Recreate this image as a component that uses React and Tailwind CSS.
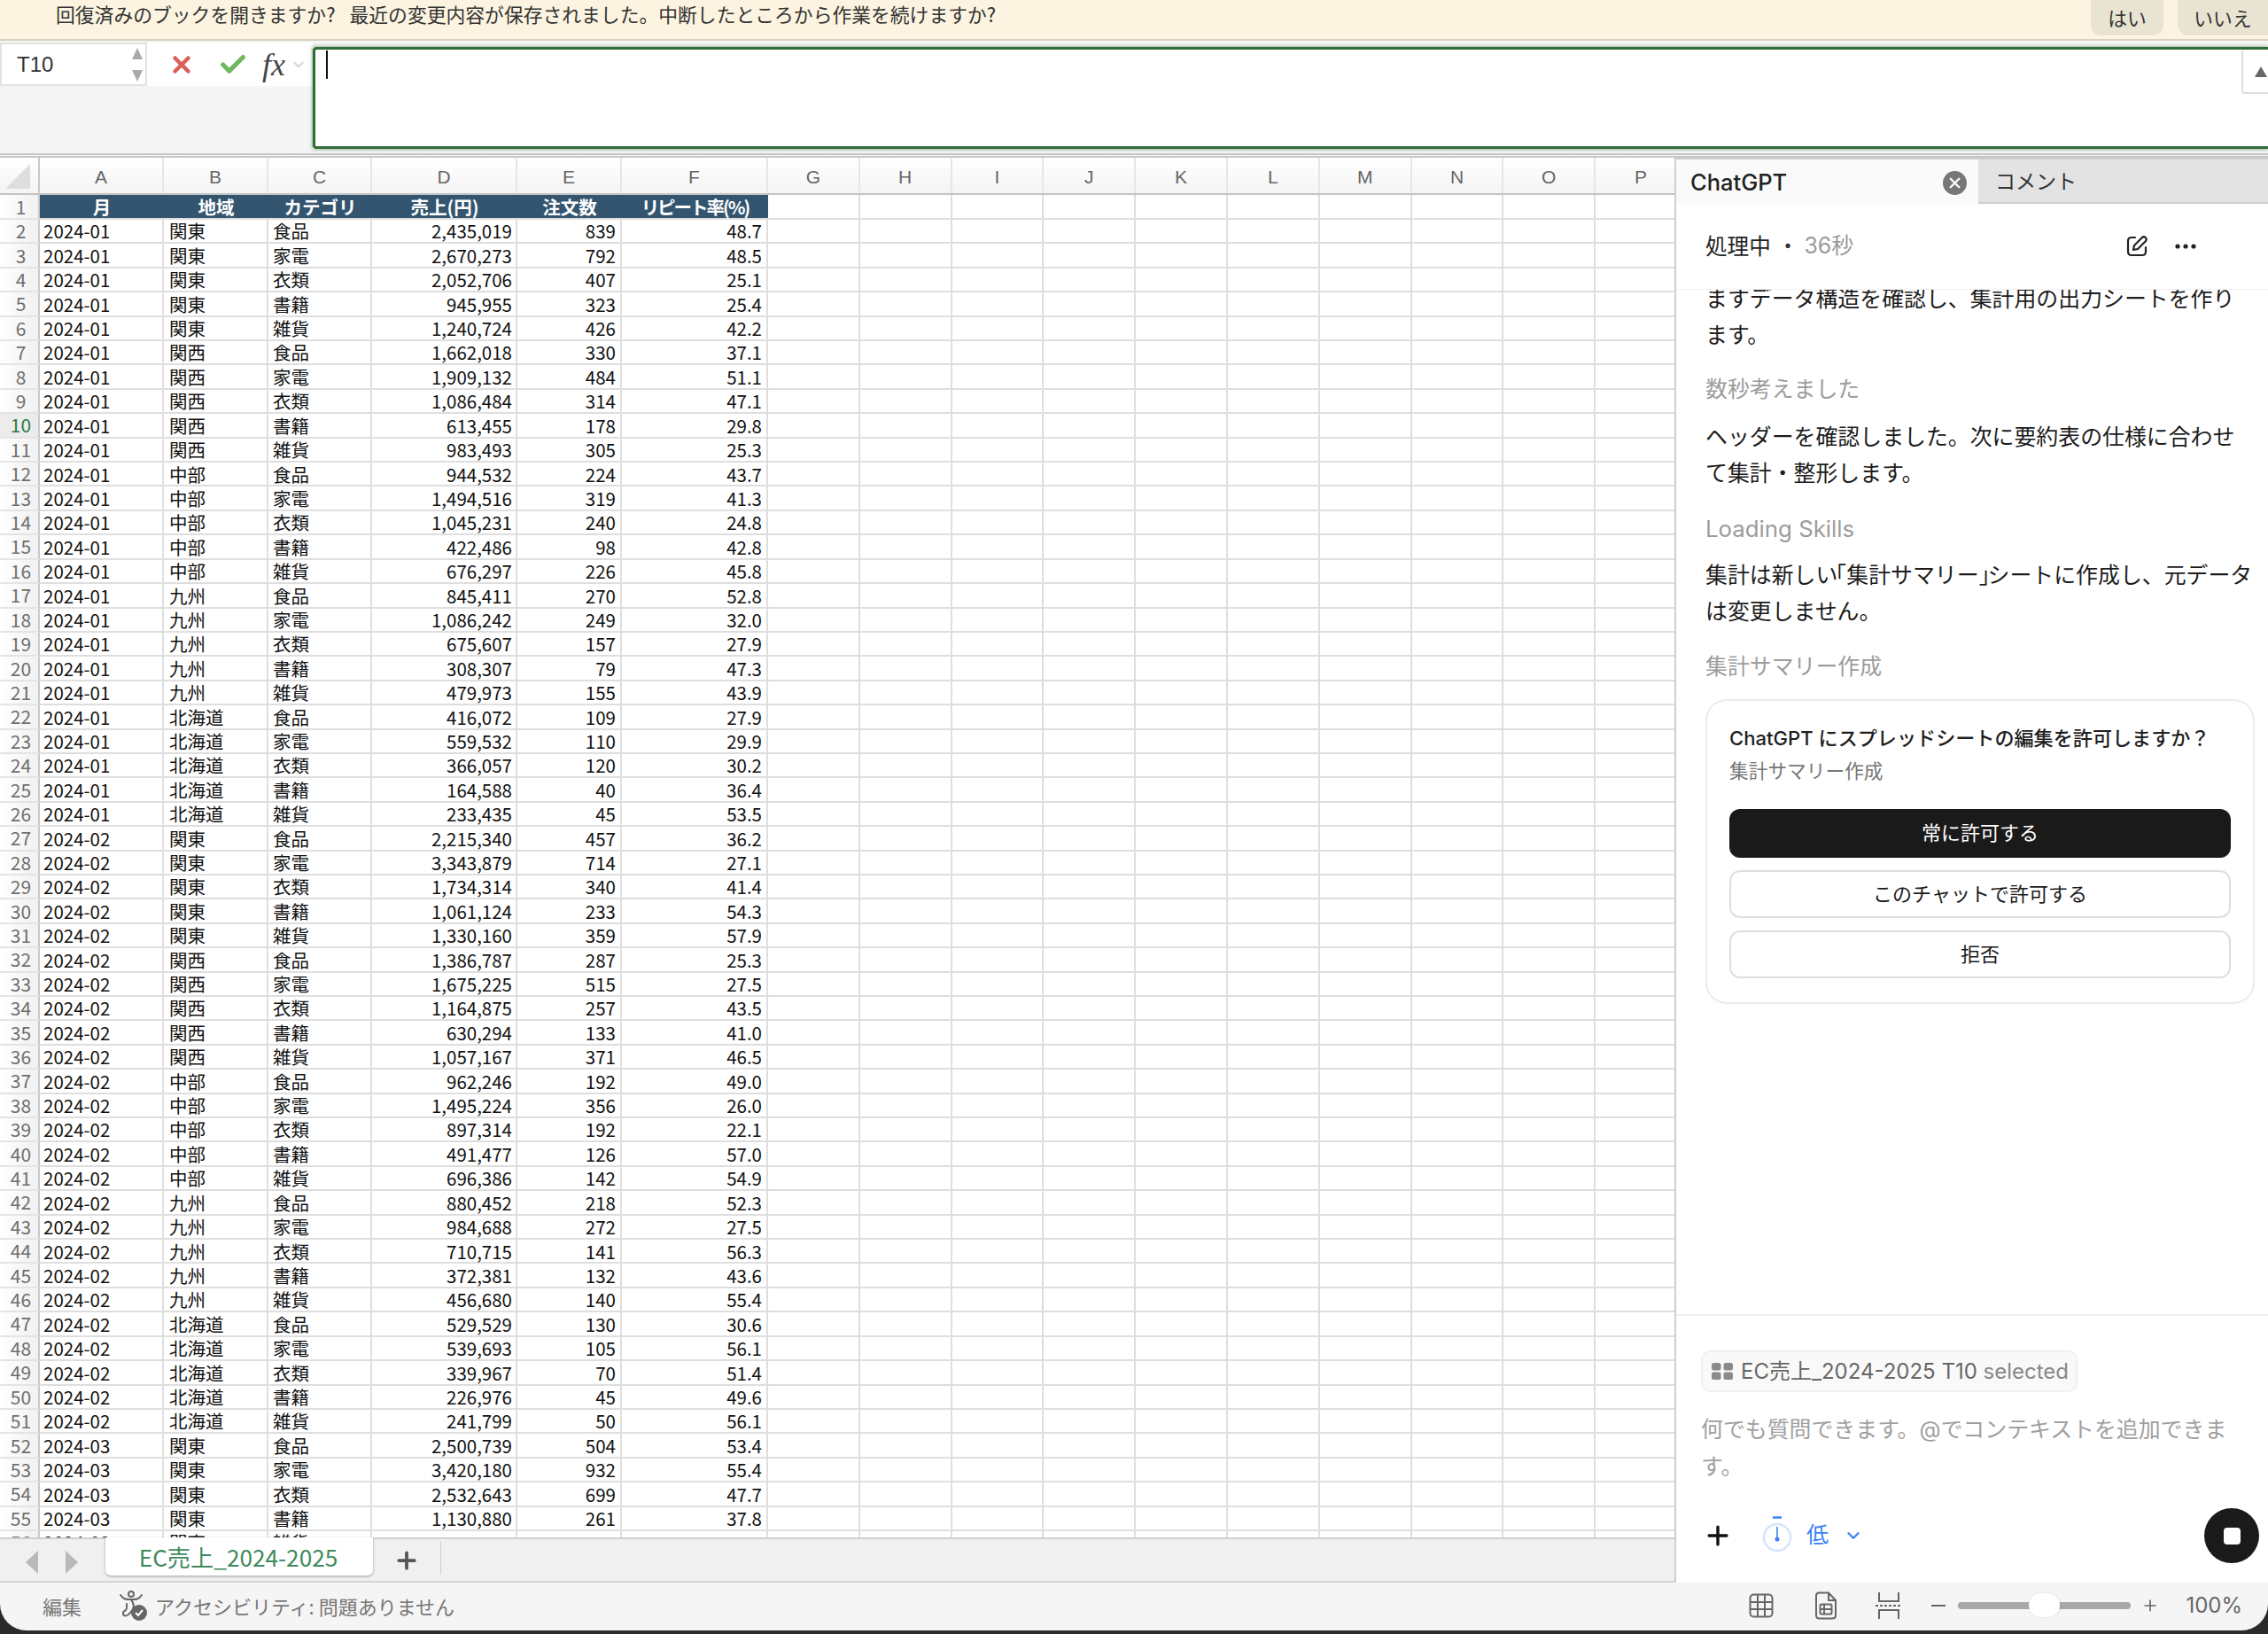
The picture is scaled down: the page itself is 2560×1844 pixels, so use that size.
import { Plus, X, Check, ChevronDown } from 'lucide-react';

const REGIONS = ['関東', '関西', '中部', '九州', '北海道'];
const CATEGORIES = ['食品', '家電', '衣類', '書籍', '雑貨'];
const LETTERS = ['G', 'H', 'I', 'J', 'K', 'L', 'M', 'N', 'O', 'P'];
const COLS = 'grid grid-cols-[45px_140px_118px_117px_164px_118px_165px_repeat(10,103.8px)]';

const VALUES = `2,435,019 839 48.7
2,670,273 792 48.5
2,052,706 407 25.1
945,955 323 25.4
1,240,724 426 42.2
1,662,018 330 37.1
1,909,132 484 51.1
1,086,484 314 47.1
613,455 178 29.8
983,493 305 25.3
944,532 224 43.7
1,494,516 319 41.3
1,045,231 240 24.8
422,486 98 42.8
676,297 226 45.8
845,411 270 52.8
1,086,242 249 32.0
675,607 157 27.9
308,307 79 47.3
479,973 155 43.9
416,072 109 27.9
559,532 110 29.9
366,057 120 30.2
164,588 40 36.4
233,435 45 53.5
2,215,340 457 36.2
3,343,879 714 27.1
1,734,314 340 41.4
1,061,124 233 54.3
1,330,160 359 57.9
1,386,787 287 25.3
1,675,225 515 27.5
1,164,875 257 43.5
630,294 133 41.0
1,057,167 371 46.5
962,246 192 49.0
1,495,224 356 26.0
897,314 192 22.1
491,477 126 57.0
696,386 142 54.9
880,452 218 52.3
984,688 272 27.5
710,715 141 56.3
372,381 132 43.6
456,680 140 55.4
529,529 130 30.6
539,693 105 56.1
339,967 70 51.4
226,976 45 49.6
241,799 50 56.1
2,500,739 504 53.4
3,420,180 932 55.4
2,532,643 699 47.7
1,130,880 261 37.8
  `.split('\n').map(line => line.trim().split(' '));

function RowNumber({ n }) {
  const active = n === 10;
  return (
    <div className={`flex items-center justify-center pl-[4px] border-r-2 border-r-[#c9c9c9] border-b-2 border-b-[#e4e4e4] text-[21px] font-normal ${active ? 'bg-[#ececec] text-[#2b7a3e]' : 'bg-linear-to-r from-white to-[#f1f1f1] text-[#6f6f6f]'}`}>
      {n}
    </div>
  );
}

const cell = 'flex items-center border-r-2 border-b-2 border-[#dedede] whitespace-nowrap';

function SheetRow({ index }) {
  const [sales = '', orders = '', rate = ''] = VALUES[index] ?? [];
  return (
    <div className={`${COLS} h-[27.42px] text-[20.5px] leading-none text-[#111]`}>
      <RowNumber n={index + 2} />
      <div className={`${cell} pl-[4px]`}>{`2024-0${Math.floor(index / 25) + 1}`}</div>
      <div className={`${cell} pl-[6px]`}>{REGIONS[Math.floor(index / 5) % 5]}</div>
      <div className={`${cell} pl-[5px]`}>{CATEGORIES[index % 5]}</div>
      <div className={`${cell} justify-end pr-[4px]`}>{sales}</div>
      <div className={`${cell} justify-end pr-[5px]`}>{orders}</div>
      <div className={`${cell} justify-end pr-[5px]`}>{rate}</div>
      {LETTERS.map(l => <div key={l} className={cell} />)}
    </div>
  );
}

function Sheet() {
  return (
    <div className="h-[1557px] overflow-hidden bg-white [font-family:'Noto_Sans_CJK_JP',sans-serif]">
      {/* column letters */}
      <div className={`${COLS} h-[42px] border-b-2 border-[#c4c4c4] text-[21px] text-[#666] bg-linear-to-b from-white to-[#f4f4f4] [font-family:'Liberation_Sans',sans-serif]`}>
        <div className="flex items-center justify-center border-r-2 border-[#c9c9c9]">
          <svg width="30" height="30" viewBox="0 0 30 30" className="ml-[-3px] mt-[2px]"><path d="M1 29 L29 1 V29 Z" fill="#dedede" /></svg>
        </div>
        {['A', 'B', 'C', 'D', 'E', 'F', ...LETTERS].map(l => (
          <div key={l} className="flex items-center justify-center pt-[3px] border-r-2 border-[#e6e6e6]">{l}</div>
        ))}
      </div>

      {/* header row */}
      <div className={`${COLS} h-[28px] text-[20.5px] leading-none font-bold text-white`}>
        <RowNumber n={1} />
        {['月', '地域', 'カテゴリ', '売上(円)', '注文数'].map(h => (
          <div key={h} className="flex items-center justify-center bg-[#34556f] border-b-2 border-[#dedede]">{h}</div>
        ))}
        <div className="flex items-center justify-center bg-[#34556f] border-b-2 border-[#dedede] tracking-[-2px]">リピート率(%)</div>
        {LETTERS.map(l => <div key={l} className={cell} />)}
      </div>

      {VALUES.map((_, i) => <SheetRow key={i} index={i} />)}
    </div>
  );
}

function SheetTabs() {
  return (
    <div className="flex items-start h-[51px] bg-[#f0f0f0] border-t-2 border-b-2 border-[#d4d4d4] border-t-[#cfcfcf] [font-family:'Noto_Sans_CJK_JP',sans-serif]">
      <svg width="14" height="26" viewBox="0 0 14 26" className="ml-[29px] mt-[13px]"><path d="M14 0 V26 L0 13 Z" fill="#b9b9b9" /></svg>
      <svg width="14" height="26" viewBox="0 0 14 26" className="ml-[31px] mt-[13px]"><path d="M0 0 V26 L14 13 Z" fill="#b9b9b9" /></svg>
      <div className="ml-[31px] mt-[-2px] flex items-center justify-center pt-[2px] pr-[2px] w-[302px] h-[43px] bg-white rounded-b-md shadow-[0_1px_3px_rgba(0,0,0,0.35)] text-[26.2px] text-[#3f8a5c]">
        EC売上_2024-2025
      </div>
      <Plus className="ml-[23px] mt-[9px] text-[#555]" size={30} strokeWidth={3} />
      <div className="ml-[23px] mt-[2px] w-px h-[38px] bg-[#cfcfcf]" />
    </div>
  );
}

function FormulaBar() {
  return (
    <div className="flex h-[132px] bg-[#f5f5f5] border-b-[5px] border-double border-[#c6c6c6] pt-[2px] [font-family:'Noto_Sans_CJK_JP',sans-serif]">
      <div className="flex items-center justify-between w-[166px] h-[49px] bg-white border-2 border-[#e3e3e3] pl-[17px] pr-[2px] text-[24px] text-[#333] [font-family:'Liberation_Sans',sans-serif]">
        T10
        <svg width="14" height="38" viewBox="0 0 14 38"><path d="M7 0 L13 13 H1 Z M7 38 L13 25 H1 Z" fill="#a9a9a9" /></svg>
      </div>
      <div className="flex items-center w-[187px] h-[49px] bg-white pl-[24px]">
        <X size={30} strokeWidth={3.6} className="text-[#d9605a]" />
        <Check size={34} strokeWidth={3.6} className="ml-[26px] text-[#6fb85f]" />
        <span className="ml-[16px] text-[36px] leading-none italic text-[#444] [font-family:'Liberation_Serif',serif]">fx</span>
        <ChevronDown size={18} strokeWidth={3} className="ml-[6px] text-[#d8d8d8]" />
      </div>
      <div className="flex-1 flex h-[115px] mt-[5px] shadow-[0_0_4px_rgba(44,110,50,0.7)]">
        <div className="flex-1 bg-white border-3 border-r-0 border-[#2f6d36] rounded-l-sm pl-[12px] pt-[1px]">
          <div className="w-[2px] h-[32px] bg-[#111]" />
        </div>
        <div className="w-[30px] bg-white border-y-3 border-[#2f6d36]">
          <div className="flex items-center pl-[13px] w-full h-[49px] mt-[1px] bg-white border-l-2 border-b-2 border-[#dddddd] rounded-bl">
            <svg width="14" height="14" viewBox="0 0 14 14"><path d="M7 1 L14 13 H0 Z" fill="#666" /></svg>
          </div>
        </div>
      </div>
    </div>
  );
}

function MoreDots() {
  return (
    <svg width="24" height="8" viewBox="0 0 24 8" fill="#222">
      <circle cx="3" cy="4" r="2.6" /><circle cx="12" cy="4" r="2.6" /><circle cx="21" cy="4" r="2.6" />
    </svg>
  );
}

function EditIcon() {
  return (
    <svg width="26" height="26" viewBox="0 0 26 26" fill="none" stroke="#222" strokeWidth="2.2" strokeLinecap="round" strokeLinejoin="round">
      <path d="M11 3 H7 Q3 3 3 7 V19 Q3 23 7 23 H19 Q23 23 23 19 V14" />
      <path d="M9 17 L10 12 L19 3 Q21 1.5 22.5 3 L23 3.5 Q24.5 5 23 7 L14 16 Z" />
    </svg>
  );
}

function Panel() {
  return (
    <div className="flex flex-col w-[670px] h-[1608px] bg-white border-l-2 border-[#cfcfcf] [font-family:'Inter','Noto_Sans_CJK_JP',sans-serif]">
      {/* tabs */}
      <div className="flex h-[52px] border-t-2 border-[#cfcfcf]">
        <div className="flex items-center justify-between w-[341px] pt-[2px] pl-[16px] pr-[13px] bg-[#fafafa] rounded-tr-md text-[25.5px] font-medium text-[#222]">
          ChatGPT
          <div className="flex items-center justify-center w-[27px] h-[27px] rounded-full bg-[#777]">
            <X size={19} strokeWidth={3} className="text-white" />
          </div>
        </div>
        <div className="flex-1 flex items-center pt-[2px] pl-[19px] bg-[#e3e3e3] border-b-2 border-[#cdcdcd] text-[23px] text-[#333]">コメント</div>
      </div>

      {/* status header */}
      <div className="relative z-10 flex items-center h-[97px] shrink-0 pl-[33px] pr-[81px] bg-white border-b border-[#f0f0f0] text-[24.6px]">
        <span className="text-[#222]">処理中</span>
        <span className="ml-[7px] text-[#333]">・</span>
        <span className="ml-[6px] text-[25px] text-[#9a9a9a]">36秒</span>
        <span className="ml-auto"><EditIcon /></span>
        <span className="ml-[30px]"><MoreDots /></span>
      </div>

      {/* messages */}
      <div className="flex-1 overflow-hidden pl-[33px] pr-[15px] text-[24.9px] leading-[41px] text-[#1c1c1c] whitespace-nowrap">
        <p className="mt-[-10px]">ますデータ構造を確認し、集計用の出力シートを作り<br />ます。</p>
        <p className="mt-[20px] h-[40px] leading-[40px] text-[#9c9c9c]">数秒考えました</p>
        <p className="mt-[14px]">ヘッダーを確認しました。次に要約表の仕様に合わせ<br />て集計・整形します。</p>
        <p className="mt-[22px] h-[40px] leading-[40px] text-[25.8px] text-[#9c9c9c]">Loading Skills</p>
        <p className="mt-[12px]">集計は新しい<span className="ml-[-15px]">「</span>集計サマリー<span className="mr-[-15px]">」</span>シートに作成し、元データ<br />は変更しません。</p>
        <p className="mt-[21px] h-[40px] leading-[40px] text-[#9c9c9c]">集計サマリー作成</p>

        <div className="mt-[17px] h-[344px] border-2 border-[#ececec] rounded-[24px] px-[25px] pt-[26px] leading-normal">
          <div className="text-[22.1px] leading-[32px] font-medium text-[#1f1f1f]">ChatGPT にスプレッドシートの編集を許可しますか？</div>
          <div className="mt-[5px] text-[21.7px] leading-[32px] text-[#777]">集計サマリー作成</div>
          <div className="mt-[27px] flex flex-col gap-[14px] text-[22px]">
            <div className="flex items-center justify-center h-[55px] rounded-xl bg-[#1a1a1a] text-white">常に許可する</div>
            <div className="flex items-center justify-center h-[54px] rounded-xl border-2 border-[#dedede] text-[#1a1a1a]">このチャットで許可する</div>
            <div className="flex items-center justify-center h-[54px] rounded-xl border-2 border-[#dedede] text-[#1a1a1a]">拒否</div>
          </div>
        </div>
      </div>

      {/* composer */}
      <div className="h-[303px] shrink-0 border-t-2 border-[#efefef] pt-[39px] pl-[28px] pr-[10px]">
        <div className="inline-flex items-center h-[47px] pl-[10px] pr-[8px] gap-[9px] rounded-[10px] bg-[#f9f9f9] border-2 border-[#f0f0f0] text-[24px] whitespace-nowrap">
          <svg width="24" height="19" viewBox="0 0 24 19" fill="#8b8b8b">
            <rect width="10.5" height="8.5" rx="2.5" /><rect x="13.5" width="10.5" height="8.5" rx="2.5" />
            <rect y="10.5" width="10.5" height="8.5" rx="2" /><rect x="13.5" y="10.5" width="10.5" height="8.5" rx="2" />
          </svg>
          <span className="text-[#666]">EC売上_2024-2025 T10 <span className="text-[#888]">selected</span></span>
        </div>
        <p className="mt-[21px] text-[24.9px] leading-[42px] text-[#a0a0a0] whitespace-nowrap">何でも質問できます。@でコンテキストを追加できま<br />す。</p>
        <div className="mt-[26px] flex items-center h-[62px]">
          <Plus size={34} strokeWidth={2.4} className="ml-[2px] text-[#111]" />
          <svg width="34" height="42" viewBox="0 0 34 42" fill="none" className="ml-[33px] mt-[-4px]">
            <circle cx="17" cy="25" r="15" stroke="#d5e5fd" strokeWidth="2.5" />
            <path d="M12 2.5 H22" stroke="#3b82f6" strokeWidth="2.5" />
            <path d="M17 13 V27" stroke="#3b82f6" strokeWidth="1.6" />
            <circle cx="17" cy="27" r="2.5" fill="#3b82f6" />
          </svg>
          <span className="ml-[16px] text-[25px] text-[#3b82f6]">低</span>
          <ChevronDown size={22} strokeWidth={2.6} className="ml-[17px] text-[#3b82f6]" />
          <div className="ml-auto flex items-center justify-center w-[62px] h-[62px] rounded-full bg-[#1a1a1a]">
            <div className="w-[19px] h-[19px] rounded-[4px] bg-white" />
          </div>
        </div>
      </div>
    </div>
  );
}

function StatusBar() {
  return (
    <div className="flex items-center h-[54px] pb-[2px] bg-[#f5f5f5] rounded-b-[30px] pl-[48px] text-[22px] text-[#777] [font-family:'Noto_Sans_CJK_JP',sans-serif]">
      <span>編集</span>
      <svg width="32" height="36" viewBox="0 0 32 36" fill="none" className="ml-[42px]">
        <circle cx="14" cy="5" r="3" stroke="#666" strokeWidth="2" />
        <path d="M2 6 C6 12 10 11 14 11 C18 11 22 12 26 6 M14 11 C18 17 18 21 13 26 C9 31 4 30 5 26 C6 22 10 26 9 16" stroke="#666" strokeWidth="2" strokeLinecap="round" />
        <circle cx="23" cy="26" r="9" fill="#666" />
        <path d="M19 26 L22 29 L27 23" stroke="#fff" strokeWidth="2" />
      </svg>
      <span className="ml-[9px]">アクセシビリティ: 問題ありません</span>

      <div className="ml-auto flex items-center text-[#666]">
        <svg width="28" height="28" viewBox="0 0 28 28" fill="none" stroke="#666" strokeWidth="2">
          <rect x="1.5" y="1.5" width="25" height="25" rx="4" />
          <path d="M10 2 V26 M18 2 V26 M2 10 H26 M2 18 H26" />
        </svg>
        <svg width="26" height="32" viewBox="0 0 26 32" fill="none" stroke="#666" strokeWidth="2" className="ml-[46px]">
          <path d="M5 1.5 H16 L24 10 V27 Q24 30.5 20 30.5 H6 Q2 30.5 2 27 V5 Q2 1.5 5 1.5 Z M16 2 V10 H24" />
          <rect x="6.5" y="14.5" width="13" height="11" rx="1.5" />
          <path d="M6.5 20 H19.5 M11 15 V25" />
        </svg>
        <svg width="30" height="32" viewBox="0 0 30 32" fill="none" stroke="#666" strokeWidth="2" className="ml-[43px]">
          <path d="M4 1 V11 H26 V1 M4 31 V21 H26 V31" />
          <path d="M0 16 H30" strokeDasharray="3 2" />
        </svg>
        <div className="ml-[33px] w-[16px] h-[2.5px] bg-[#666]" />
        {/* zoom slider */}
        <div className="relative ml-[14px] w-[195px] h-[8px] rounded-full bg-[#a8a8a8]">
          <div className="absolute left-[80px] top-[-10px] w-[35px] h-[27px] rounded-full bg-white shadow-[0_0_3px_rgba(0,0,0,0.1)]" />
        </div>
        <Plus size={20} strokeWidth={2} className="ml-[12px] text-[#666]" />
        <span className="ml-[30px] mr-[29px] text-[24px] text-[#666] [font-family:'Inter',sans-serif]">100%</span>
      </div>
    </div>
  );
}

export default function App() {
  return (
    <div className="w-[2560px] h-[1844px] overflow-hidden bg-[#2a2a2a]">
      {/* recovery banner */}
      <div className="flex items-start justify-between h-[46px] pl-[63px] bg-[#fcf4e0] border-b-2 border-[#d8d1bf] text-[21.8px] text-[#333] [font-family:'Noto_Sans_CJK_JP',sans-serif]">
        <div className="whitespace-nowrap">
          回復済みのブックを開きますか?<span className="ml-[16px]">最近の変更内容が保存されました。中断したところから作業を続けますか?</span>
        </div>
        <div className="flex gap-[16px]">
          <div className="flex items-center justify-center w-[82px] h-[40px] rounded-b-xl bg-[#e9e3d2]">はい</div>
          <div className="flex items-center justify-center w-[102px] h-[40px] rounded-bl-xl bg-[#e9e3d2]">いいえ</div>
        </div>
      </div>

      <FormulaBar />

      <div className="flex h-[1608px] bg-white">
        <div className="w-[1890px] shrink-0 overflow-hidden">
          <Sheet />
          <SheetTabs />
        </div>
        <Panel />
      </div>

      <StatusBar />
    </div>
  );
}
